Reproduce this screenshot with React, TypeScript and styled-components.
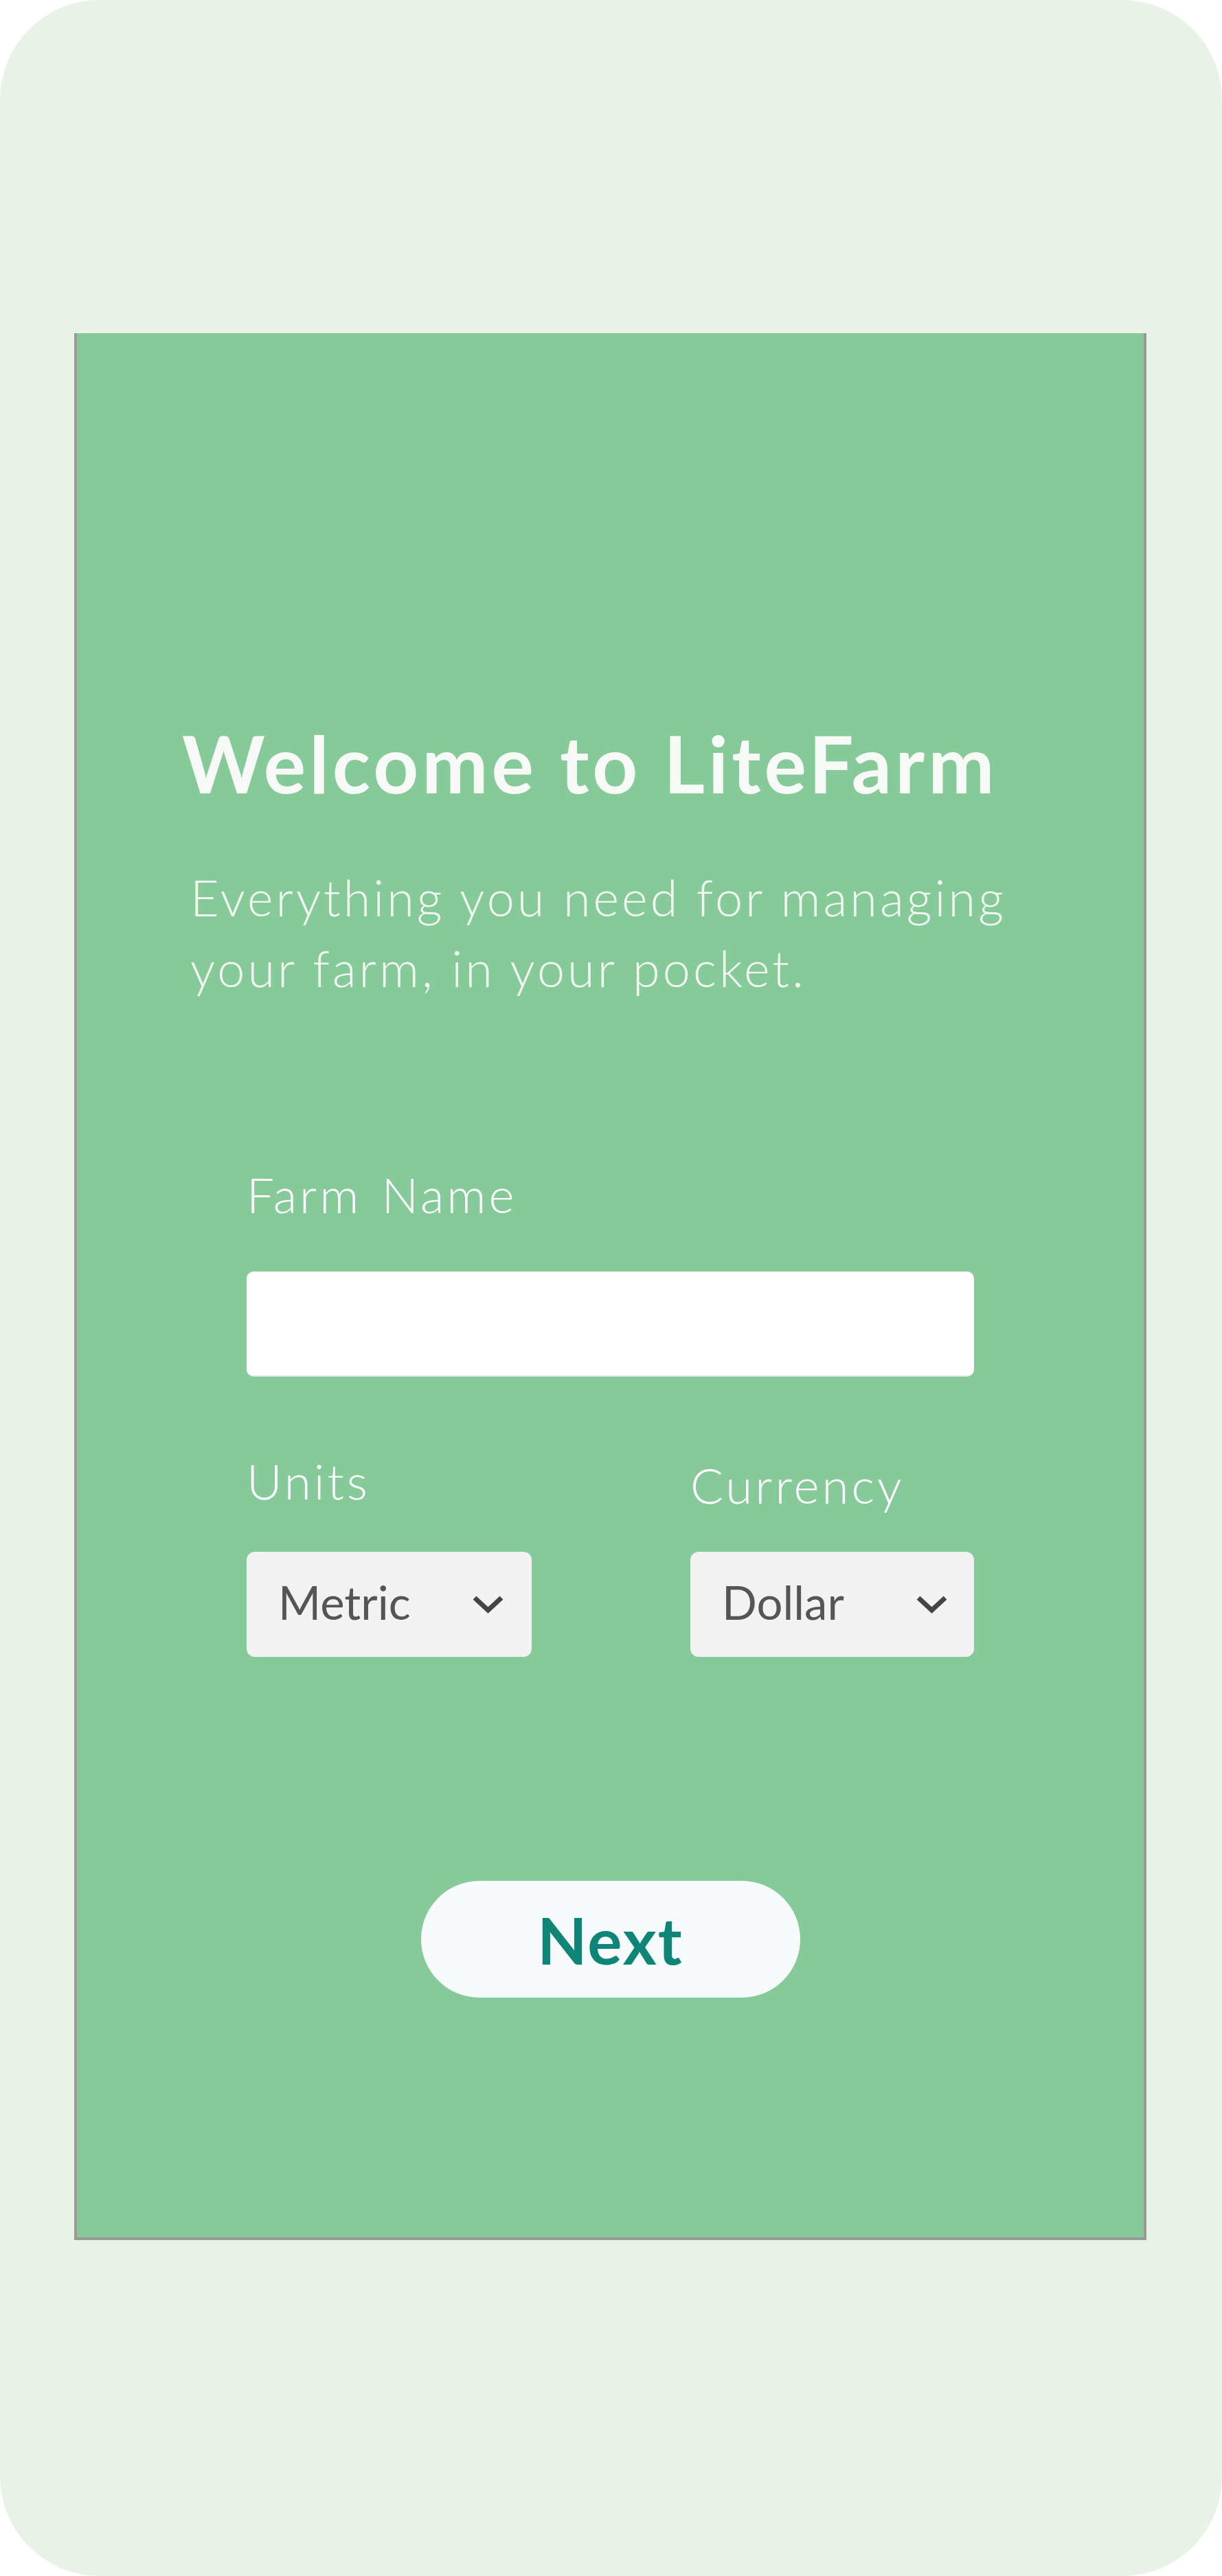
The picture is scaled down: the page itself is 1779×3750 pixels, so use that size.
import React from 'react';
import styled, { createGlobalStyle } from 'styled-components';

const GlobalStyle = createGlobalStyle`
  html, body {
    margin: 0;
    padding: 0;
    background: #ffffff;
  }
  body {
    font-family: 'Lato', 'Open Sans', sans-serif;
  }
`;

export const Frame = styled.div`
  box-sizing: border-box;
  width: 1779px;
  height: 3750px;
  padding-top: 485px;
  padding-left: 108px;
  background: #e8f2e7;
  border-radius: 145px;
  overflow: hidden;
`;

export const Screen = styled.div`
  box-sizing: border-box;
  width: 1561px;
  height: 2776px;
  padding: 556px 0 0 0;
  background: #86ca9a;
  border: 4px solid #999999;
  border-top: none;
  display: flex;
  flex-direction: column;
`;

export const Intro = styled.div`
  padding-left: 153px;
`;

export const Title = styled.h1`
  margin: 0;
  font-family: 'Lato', sans-serif;
  font-weight: 700;
  font-size: 115px;
  line-height: 138px;
  letter-spacing: 5px;
  color: #f7f9f7;
`;

export const Subtitle = styled.p`
  margin: 76px 0 0 12px;
  font-family: 'Lato', sans-serif;
  font-weight: 300;
  font-size: 72px;
  line-height: 103px;
  letter-spacing: 4px;
  color: #f3f8f3;
`;

export const Form = styled.form`
  margin: 235px 247px 0 247px;
  display: flex;
  flex-direction: column;
`;

export const Label = styled.label<{ $offset?: number }>`
  display: block;
  font-family: 'Lato', sans-serif;
  font-weight: 300;
  font-size: 71px;
  line-height: 85px;
  letter-spacing: 4px;
  word-spacing: 6px;
  color: #ffffff;
  padding-top: ${p => p.$offset || 0}px;
`;

export const TextInput = styled.input`
  box-sizing: border-box;
  margin-top: 70px;
  width: 100%;
  height: 153px;
  border: none;
  border-bottom: 2px solid #ececec;
  border-radius: 10px;
  background: #ffffff;
  outline: none;
`;

export const FieldRow = styled.div`
  margin-top: 109px;
  display: flex;
  justify-content: space-between;
`;

export const Field = styled.div<{ $width: number }>`
  width: ${p => p.$width}px;
  display: flex;
  flex-direction: column;
`;

export const LabelSlot = styled.div`
  height: 146px;
`;

export const Select = styled.div<{ $right: number }>`
  box-sizing: border-box;
  height: 153px;
  padding: 0 ${p => p.$right}px 0 46px;
  display: flex;
  align-items: center;
  justify-content: space-between;
  background: #f2f2f2;
  border-radius: 12px;
  font-family: 'Lato', sans-serif;
  font-size: 67px;
  color: #555555;
`;

export const SelectValue = styled.span`
  margin-top: -8px;
`;

export const Actions = styled.div`
  margin-top: 326px;
  display: flex;
  justify-content: center;
`;

export const NextButton = styled.button`
  width: 552px;
  height: 170px;
  border: none;
  border-radius: 85px;
  background: #f6fafa;
  font-family: 'Lato', sans-serif;
  font-weight: 700;
  font-size: 94px;
  letter-spacing: 2px;
  color: #0e8577;
  cursor: pointer;
`;

const Chevron = () => (
  <svg width="47" height="27" viewBox="0 0 47 27">
    <polyline
      points="4,4 23.5,22 43,4"
      fill="none"
      stroke="#444444"
      strokeWidth="7"
      strokeLinejoin="miter"
    />
  </svg>
);

const Dropdown = ({ value, right }: { value: string; right: number }) => (
  <Select $right={right}>
    <SelectValue>{value}</SelectValue>
    <Chevron />
  </Select>
);

export default function App() {
  return (
    <>
      <GlobalStyle />
      <Frame>
        <Screen>
          <Intro>
            <Title>Welcome to LiteFarm</Title>
            <Subtitle>
              Everything you need for managing
              <br />
              your farm, in your pocket.
            </Subtitle>
          </Intro>

          <Form onSubmit={e => e.preventDefault()}>
            <Label>Farm Name</Label>
            <TextInput type="text" />

            <FieldRow>
              <Field $width={415}>
                <LabelSlot>
                  <Label>Units</Label>
                </LabelSlot>
                <Dropdown value="Metric" right={40} />
              </Field>
              <Field $width={413}>
                <LabelSlot>
                  <Label $offset={6}>Currency</Label>
                </LabelSlot>
                <Dropdown value="Dollar" right={38} />
              </Field>
            </FieldRow>
          </Form>

          <Actions>
            <NextButton type="button">Next</NextButton>
          </Actions>
        </Screen>
      </Frame>
    </>
  );
}
